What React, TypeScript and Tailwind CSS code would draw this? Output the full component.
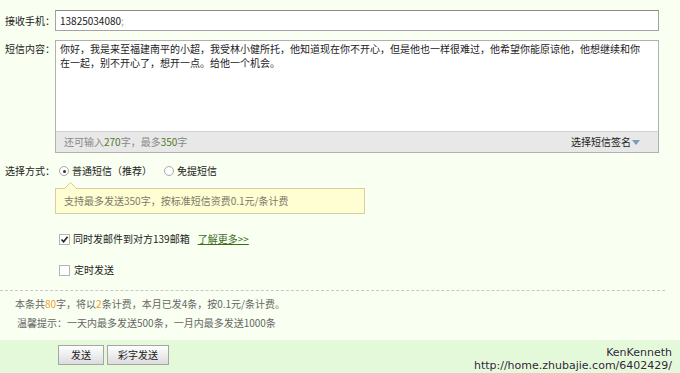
import React from 'react';

function Radio({ checked }: { checked?: boolean }) {
  return (
    <span className="w-[10px] h-[10px] rounded-full border border-[#a9a9a9] bg-white flex items-center justify-center shrink-0">
      {checked && <span className="w-[3px] h-[3px] rounded-full bg-[#333]" />}
    </span>
  );
}

function Check({ checked }: { checked?: boolean }) {
  return (
    <span className="w-[11px] h-[11px] border border-[#b5b5b5] bg-white flex items-center justify-center shrink-0">
      {checked && (
        <svg width="9" height="9" viewBox="0 0 9 9">
          <path d="M1.5 4.5 L3.6 6.8 L7.6 1.8" fill="none" stroke="#222" strokeWidth="1.6" />
        </svg>
      )}
    </span>
  );
}

export default function App() {
  return (
    <div className="w-[680px] h-[373px] bg-[#f9fff1] text-[10px] text-[#333] overflow-hidden relative font-['Noto_Sans_CJK_SC','Noto_Sans',sans-serif] leading-[14px]">
      <div className="pt-[10px]">
        {/* 接收手机 */}
        <div className="flex items-center">
          <span className="w-[55px] pl-[5px] text-[#222]">接收手机：</span>
          <div className="w-[604px] h-[21px] bg-white border border-[#a3a3a3] border-t-[#8a8a8a] px-[4px] flex items-center">
            <span className="text-[#222]">13825034080</span>
            <span className="text-[#aaa]">;</span>
          </div>
        </div>

        {/* 短信内容 */}
        <div className="flex items-start mt-[9px]">
          <span className="w-[55px] pl-[5px] pt-[2px] text-[#222]">短信内容：</span>
          <div className="w-[604px] h-[113px] border border-[#b0b0b0] bg-white flex flex-col">
            <div className="flex-1 pl-[4px] pr-[14px] pt-[1px] text-[#222]">
              你好，我是来至福建南平的小超，我受林小健所托，他知道现在你不开心，但是他也一样很难过，他希望你能原谅他，他想继续和你在一起，别不开心了，想开一点。给他一个机会。
            </div>
            <div className="h-[21px] bg-[#e8e8e8] border-t border-[#cfcfcf] flex items-center justify-between pl-[8px] pr-[18px]">
              <span className="text-[#888]">
                还可输入<span className="text-[#4d7a2a]">270</span>字，最多<span className="text-[#4d7a2a]">350</span>字
              </span>
              <span className="flex items-center text-[#222]">
                选择短信签名
                <svg width="8" height="5" viewBox="0 0 8 5" className="ml-[1px]">
                  <path d="M0 0 H8 L4 5 Z" fill="#7b9bbb" />
                </svg>
              </span>
            </div>
          </div>
        </div>

        {/* 选择方式 */}
        <div className="flex items-center mt-[11px]">
          <span className="w-[59px] pl-[5px] text-[#222]">选择方式：</span>
          <Radio checked />
          <span className="ml-[3px] text-[#222]">普通短信（推荐）</span>
          <span className="ml-[12px]"><Radio /></span>
          <span className="ml-[3px] text-[#222]">免提短信</span>
        </div>

        <div className="ml-[55px] mt-[10px] relative w-[310px]">
          <svg width="13" height="7" viewBox="0 0 13 7" className="absolute left-[9px] -top-[6px]">
            <path d="M0 7 L6.5 0.5 L13 7" fill="#fffdd2" stroke="#d6cf9e" />
          </svg>
          <div className="h-[26px] bg-[#fffdd2] border border-[#d6cf9e] flex items-center pl-[8px] text-[#7a7a6a]">
            支持最多发送350字，按标准短信资费0.1元/条计费
          </div>
        </div>

        {/* 选项 */}
        <div className="ml-[59px] mt-[18px] flex items-center">
          <Check checked />
          <span className="ml-[3px] text-[#222]">同时发邮件到对方139邮箱</span>
          <span className="ml-[8px] text-[#3c6a1c] underline">了解更多&gt;&gt;</span>
        </div>
        <div className="ml-[59px] mt-[17px] flex items-center">
          <Check />
          <span className="ml-[4px] text-[#222]">定时发送</span>
        </div>

        <div className="w-[665px] border-t border-dashed border-[#c8c8c8] mt-[13px]" />

        <div className="pl-[15px] mt-[6px] text-[#666]">
          本条共<span className="text-[#f0a030]">80</span>字，将以<span className="text-[#f0a030]">2</span>条计费，本月已发4条，按0.1元/条计费。
        </div>
        <div className="pl-[17px] mt-[5px] text-[#666]">
          温馨提示：一天内最多发送500条，一月内最多发送1000条
        </div>

        {/* 按钮 */}
        <div className="mt-[10px] h-[40px] bg-[#e4f8da] flex items-start pt-[5px] pl-[58px] gap-[3px]">
          <button className="w-[46px] h-[20px] border border-[#a5a5a5] bg-gradient-to-b from-white to-[#dcdcdc] text-[#222]">
            发送
          </button>
          <button className="w-[62px] h-[20px] border border-[#a5a5a5] bg-gradient-to-b from-white to-[#dcdcdc] text-[#222]">
            彩字发送
          </button>
        </div>
      </div>

      <div className="absolute right-[8px] bottom-[1px] text-right text-[11px] leading-[13px] text-[#2a2a2a] font-['DejaVu_Sans',sans-serif] [text-shadow:0_0_2px_#fff]">
        <div>KenKenneth</div>
        <div>http://home.zhubajie.com/6402429/</div>
      </div>
    </div>
  );
}
